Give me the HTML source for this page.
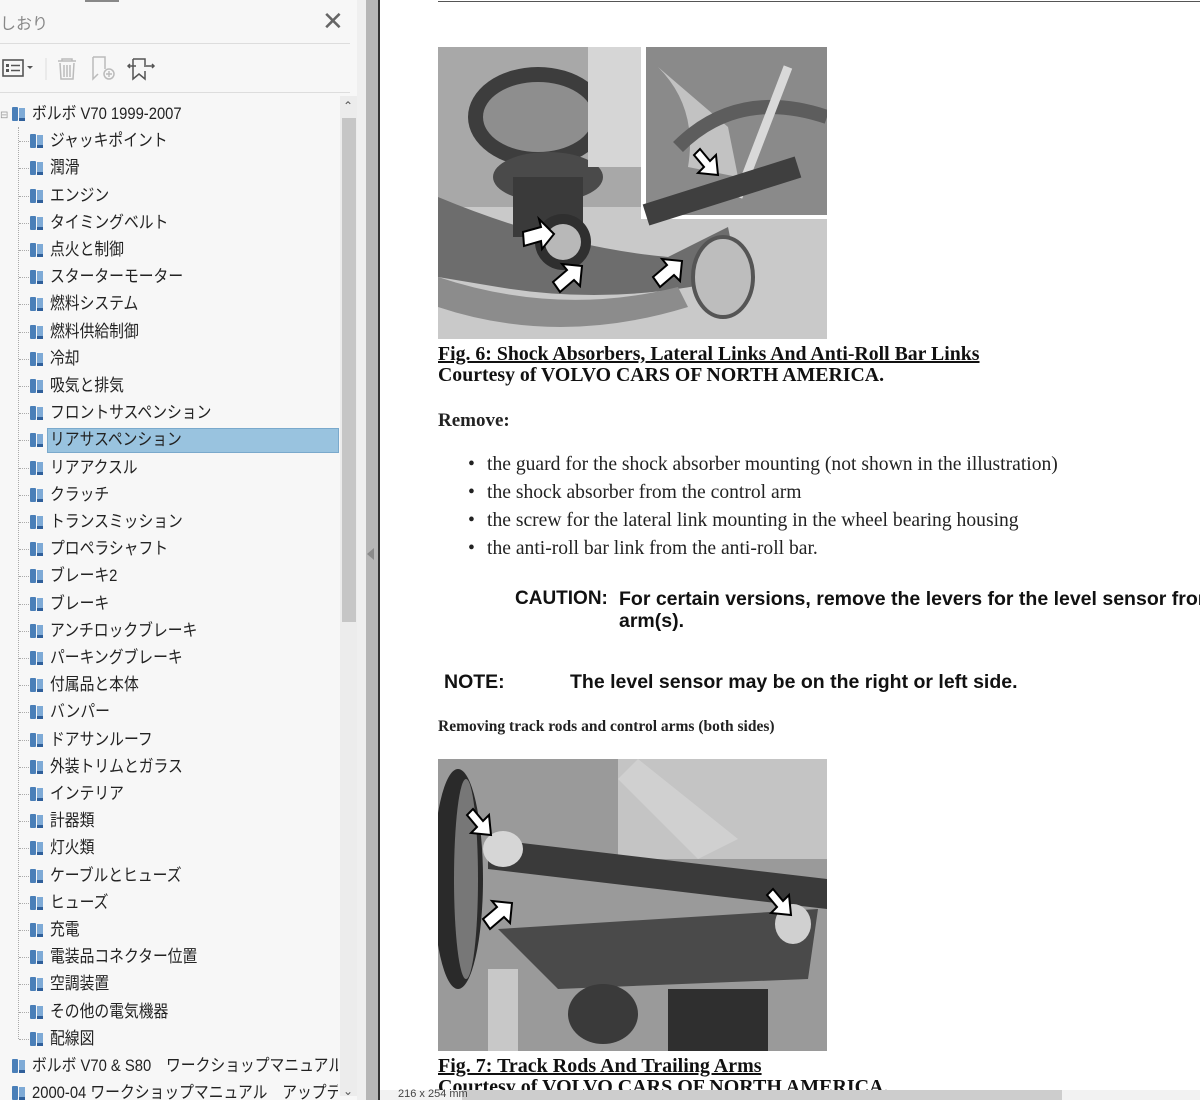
<!DOCTYPE html>
<html><head><meta charset="utf-8"><style>
*{margin:0;padding:0;box-sizing:border-box}
body{width:1200px;height:1100px;overflow:hidden;background:#fff;position:relative;font-family:"Liberation Sans","Noto Sans CJK JP",sans-serif}
.abs{position:absolute}
#side{left:0;top:0;width:357px;height:1100px;background:#f7f7f7}
.row{position:absolute;left:0;height:26px;font-size:17px;color:#222;line-height:26px;white-space:nowrap}
.row .t{display:inline-block;transform:scaleX(0.87);transform-origin:0 50%;margin-left:20px}
.ic{position:absolute;top:6px;width:14px;height:15px}
.ic:before{content:"";position:absolute;left:0;top:0;width:6px;height:14px;background:#4a7fb8;border-radius:1px}
.ic:after{content:"";position:absolute;left:7px;top:1px;width:6px;height:10px;background:#7eaad6;border-bottom:3px solid #2f5f9a}
.serif{font-family:"Liberation Serif","Noto Serif CJK SC",serif}
.narrow{font-family:"Liberation Sans",sans-serif;font-weight:bold}
ul{list-style:none}
li.b{position:absolute;left:487px;font-family:"Liberation Serif",serif;font-size:19.6px;color:#222;white-space:nowrap}
li.b:before{content:"•";position:absolute;left:-19px}
</style></head><body>
<div id="side" class="abs">
  <div class="abs" style="left:85px;top:0;width:34px;height:2px;background:#888"></div>
  <div class="abs" style="left:0;top:10px;font-size:16px;color:#888">しおり</div>
  <div class="abs" style="left:322px;top:6px;font-size:26px;color:#666;font-weight:300">✕</div>
  <div class="abs" style="left:0;top:43px;width:350px;height:1px;background:#ddd"></div>
  <svg class="abs" style="left:0;top:52px" width="160" height="32">
    <rect x="3" y="8" width="20" height="16" fill="none" stroke="#555" stroke-width="1.6"/>
    <rect x="6" y="12" width="3" height="3" fill="#555"/><rect x="6" y="17" width="3" height="3" fill="#555"/>
    <line x1="11" y1="13.5" x2="20" y2="13.5" stroke="#555" stroke-width="1.5"/><line x1="11" y1="18.5" x2="20" y2="18.5" stroke="#555" stroke-width="1.5"/>
    <path d="M27 14l3 3 3-3z" fill="#555"/>
    <line x1="46" y1="6" x2="46" y2="28" stroke="#ddd"/>
    <path d="M58 9h18M62 9v-2h10v2M60 11l1 16h12l1-16M64 13v12M67 13v12M70 13v12" fill="none" stroke="#bbb" stroke-width="1.5"/>
    <path d="M93 5h12v12M93 5v22l5-5" fill="none" stroke="#bbb" stroke-width="1.5"/><circle cx="109" cy="22" r="5" fill="none" stroke="#bbb" stroke-width="1.5"/><path d="M106 22h6M109 19v6" stroke="#bbb" stroke-width="1.4"/>
    <path d="M133 7h12v8M133 7v20l6-5 6 5v-8M128 14h8M146 14h8M130 12l-2 2 2 2M152 12l2 2-2 2" fill="none" stroke="#555" stroke-width="1.5"/>
  </svg>
  <div class="abs" style="left:0;top:92px;width:350px;height:1px;background:#ddd"></div>
  <div class="abs" style="left:340px;top:96px;width:17px;height:1000px;background:#ececec"></div>
  <div class="abs" style="left:342px;top:118px;width:14px;height:504px;background:#c6c6c6"></div>
  <div class="abs" style="left:343px;top:99px;font-size:12px;color:#555">⌃</div>
  <div class="abs" style="left:343px;top:1084px;font-size:12px;color:#555">⌄</div>
  <div class="abs" style="left:0;top:110px;font-size:10px;color:#999">⊟</div>
  <div class="abs" style="left:18px;top:127px;width:1px;height:912px;border-left:1px dotted #aaa"></div>
  <div class="abs" style="left:47px;top:428px;width:292px;height:25px;background:#99c3df;border:1px solid #7aa9cc"></div>
  <div id="tree" class="abs" style="left:0;top:0;width:338px;height:1100px;overflow:hidden"></div>
</div>
<div class="abs" style="left:357px;top:0;width:9px;height:1100px;background:#efefef"></div>
<div class="abs" style="left:366px;top:0;width:12px;height:1100px;background:#b6b6b6"></div>
<div class="abs" style="left:367px;top:548px;width:0;height:0;border-top:6px solid transparent;border-bottom:6px solid transparent;border-right:7px solid #8a8a8a"></div>
<div class="abs" style="left:378px;top:0;width:2px;height:1100px;background:#333"></div>

<div class="abs" style="left:438px;top:1px;width:762px;height:1px;background:#555"></div>
<svg class="abs" style="left:438px;top:47px" width="389" height="292">
  <rect width="389" height="292" fill="#c9c9c9"/>
  <path d="M0 0h389v160H0z" fill="#a8a8a8"/>
  <path d="M0 150 Q120 200 230 210 L290 180 L300 230 Q180 260 60 240 L0 230z" fill="#6d6d6d"/>
  <path d="M0 230 Q120 270 240 240 L250 260 Q120 300 0 260z" fill="#8c8c8c"/>
  <ellipse cx="100" cy="70" rx="70" ry="50" fill="#3d3d3d"/><ellipse cx="100" cy="70" rx="55" ry="35" fill="#8e8e8e"/>
  <ellipse cx="110" cy="130" rx="55" ry="25" fill="#4a4a4a"/>
  <rect x="75" y="130" width="70" height="60" fill="#3a3a3a"/>
  <circle cx="125" cy="195" r="28" fill="#2f2f2f"/><circle cx="125" cy="195" r="18" fill="#b8b8b8"/>
  <path d="M150 0h60v120h-60z" fill="#d6d6d6"/>
  <ellipse cx="285" cy="230" rx="30" ry="40" fill="#bdbdbd" stroke="#555" stroke-width="4"/>
  <rect x="203" y="0" width="186" height="172" fill="#fff"/>
  <rect x="208" y="0" width="181" height="168" fill="#8a8a8a"/>
  <path d="M220 20 Q260 60 250 120 L300 130 L290 80 Z" fill="#c2c2c2"/>
  <path d="M240 100 Q300 40 389 70" fill="none" stroke="#5d5d5d" stroke-width="14"/>
  <path d="M350 20 L300 150" stroke="#d9d9d9" stroke-width="9"/>
  <path d="M208 168 L360 120" stroke="#3f3f3f" stroke-width="22"/>
  <g fill="#fff" stroke="#000" stroke-width="2">
    <path d="M85 185l18 -5 -2 -8 15 15 -12 15 -1 -8 -17 5z"/>
    <path d="M115 235l14 -12 -5 -6 20 2 -2 20 -6 -6 -14 12z"/>
    <path d="M215 230l14 -12 -5 -6 20 2 -2 20 -6 -6 -14 12z"/>
    <path d="M262 102l10 12 6 -6 2 20 -20 -2 6 -6 -10 -12z"/>
  </g>
</svg>
<div class="abs serif" style="left:438px;top:344px;font-size:20px;font-weight:bold;color:#111;line-height:21px;white-space:nowrap;transform:scaleX(0.99);transform-origin:0 0"><u>Fig. 6: Shock Absorbers, Lateral Links And Anti-Roll Bar Links</u><br>Courtesy of VOLVO CARS OF NORTH AMERICA.</div>
<div class="abs serif" style="left:438px;top:410px;font-size:19px;font-weight:bold;color:#222">Remove:</div>
<ul>
<li class="b" style="top:454px">the guard for the shock absorber mounting (not shown in the illustration)</li>
<li class="b" style="top:482px">the shock absorber from the control arm</li>
<li class="b" style="top:510px">the screw for the lateral link mounting in the wheel bearing housing</li>
<li class="b" style="top:538px">the anti-roll bar link from the anti-roll bar.</li>
</ul>
<div class="abs narrow" style="left:515px;top:588px;font-size:19px;color:#111;line-height:22px;white-space:nowrap">CAUTION:</div>
<div class="abs narrow" style="left:619px;top:588px;font-size:19.5px;color:#111;line-height:22px;white-space:nowrap">For certain versions, remove the levers for the level sensor from<br>arm(s).</div>
<div class="abs narrow" style="left:444px;top:671px;font-size:19.5px;color:#111;white-space:nowrap">NOTE:</div>
<div class="abs narrow" style="left:570px;top:671px;font-size:19.5px;color:#111;white-space:nowrap">The level sensor may be on the right or left side.</div>
<div class="abs serif" style="left:438px;top:718px;font-size:15.5px;font-weight:bold;color:#222;white-space:nowrap">Removing track rods and control arms (both sides)</div>
<svg class="abs" style="left:438px;top:759px" width="389" height="292">
  <rect width="389" height="292" fill="#9a9a9a"/>
  <path d="M180 0h209v100H180z" fill="#c4c4c4"/>
  <ellipse cx="20" cy="120" rx="25" ry="110" fill="#2a2a2a"/><ellipse cx="28" cy="120" rx="12" ry="100" fill="#777"/>
  <path d="M50 80 L389 120 L389 150 L50 110z" fill="#3a3a3a"/>
  <path d="M60 170 L380 150 L370 220 L120 230z" fill="#4a4a4a"/>
  <path d="M200 0 L300 80 L260 100 L180 20z" fill="#d0d0d0"/>
  <rect x="50" y="210" width="30" height="82" fill="#c8c8c8"/>
  <ellipse cx="165" cy="255" rx="35" ry="30" fill="#3a3a3a"/>
  <path d="M230 230h100v62H230z" fill="#2f2f2f"/>
  <ellipse cx="65" cy="90" rx="20" ry="18" fill="#d6d6d6"/><ellipse cx="355" cy="165" rx="18" ry="20" fill="#d0d0d0"/>
  <g fill="#fff" stroke="#000" stroke-width="2">
    <path d="M35 50l10 12 6 -6 2 20 -20 -2 6 -6 -10 -12z"/>
    <path d="M45 160l14 -12 -5 -6 20 2 -2 20 -6 -6 -14 12z"/>
    <path d="M335 130l10 12 6 -6 2 20 -20 -2 6 -6 -10 -12z"/>
  </g>
</svg>
<div class="abs serif" style="left:438px;top:1056px;font-size:20px;font-weight:bold;color:#111;line-height:21px;white-space:nowrap"><u>Fig. 7: Track Rods And Trailing Arms</u><br>Courtesy of VOLVO CARS OF NORTH AMERICA.</div>
<div class="abs" style="left:380px;top:1090px;width:820px;height:10px;background:#f2f2f2"></div>
<div class="abs" style="left:462px;top:1090px;width:600px;height:10px;background:#cdcdcd"></div>
<div class="abs" style="left:398px;top:1089px;font-size:11px;color:#444;line-height:11px">216 x 254 mm</div>

<script>
var items=[["ボルボ V70 1999-2007",12],["ジャッキポイント",30],["潤滑",30],["エンジン",30],["タイミングベルト",30],["点火と制御",30],["スターターモーター",30],["燃料システム",30],["燃料供給制御",30],["冷却",30],["吸気と排気",30],["フロントサスペンション",30],["リアサスペンション",30],["リアアクスル",30],["クラッチ",30],["トランスミッション",30],["プロペラシャフト",30],["ブレーキ2",30],["ブレーキ",30],["アンチロックブレーキ",30],["パーキングブレーキ",30],["付属品と本体",30],["バンパー",30],["ドアサンルーフ",30],["外装トリムとガラス",30],["インテリア",30],["計器類",30],["灯火類",30],["ケーブルとヒューズ",30],["ヒューズ",30],["充電",30],["電装品コネクター位置",30],["空調装置",30],["その他の電気機器",30],["配線図",30],["ボルボ V70 & S80　ワークショップマニュアル",12],["2000-04 ワークショップマニュアル　アップデート",12]];
var h="";
items.forEach(function(it,i){var y=101+i*27.2;var x=it[1];
if(x==30)h+='<div class="abs" style="left:19px;top:'+(y+13)+'px;width:10px;border-top:1px dotted #aaa"></div>';
h+='<div class="row" style="top:'+y+'px;left:'+x+'px"><span class="ic" style="left:0"></span><span class="t">'+it[0]+'</span></div>';});
document.getElementById("tree").innerHTML=h;
</script>
</body></html>
